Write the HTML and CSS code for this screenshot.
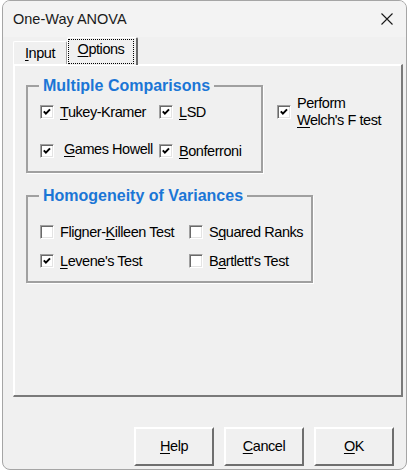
FILE: index.html
```html
<!DOCTYPE html>
<html>
<head>
<meta charset="utf-8">
<link rel="stylesheet" href="styles.css">
</head>
<body>
<div class="window">
  <div class="titlebar">
    <span class="title">One-Way ANOVA</span>
    <svg class="close" width="12" height="12" viewBox="0 0 12 12"><path d="M0.5 0.5 L11.5 11.5 M11.5 0.5 L0.5 11.5" stroke="#1a1a1a" stroke-width="1.1" fill="none"/></svg>
  </div>
  <div class="tabs">
    <div class="tab"><u>I</u>nput</div>
    <div class="tab active"><span class="focus"><u>O</u>ptions</span></div>
  </div>
  <div class="page">
    <div class="top-row">
      <div class="group g1">
        <span class="legend">Multiple Comparisons</span>
        <div class="cbgrid g1grid">
          <div class="cb"><span class="box checked"><svg viewBox="0 0 14 14"><path d="M3.8 6.3 L5.9 8.6 L10 4.4" stroke="#000" stroke-width="2" fill="none"/></svg></span><span><u>T</u>ukey-Kramer</span></div>
          <div class="cb"><span class="box checked"><svg viewBox="0 0 14 14"><path d="M3.8 6.3 L5.9 8.6 L10 4.4" stroke="#000" stroke-width="2" fill="none"/></svg></span><span><u>L</u>SD</span></div>
          <div class="cb"><span class="box checked"><svg viewBox="0 0 14 14"><path d="M3.8 6.3 L5.9 8.6 L10 4.4" stroke="#000" stroke-width="2" fill="none"/></svg></span><span class="lead"><u>G</u>ames Howell</span></div>
          <div class="cb"><span class="box checked"><svg viewBox="0 0 14 14"><path d="M3.8 6.3 L5.9 8.6 L10 4.4" stroke="#000" stroke-width="2" fill="none"/></svg></span><span><u>B</u>onferroni</span></div>
        </div>
      </div>
      <div class="cb welch"><span class="box checked"><svg viewBox="0 0 14 14"><path d="M3.8 6.3 L5.9 8.6 L10 4.4" stroke="#000" stroke-width="2" fill="none"/></svg></span><span class="two">Perform<br><u>W</u>elch's F test</span></div>
    </div>
    <div class="group g2">
      <span class="legend">Homogeneity of Variances</span>
      <div class="cbgrid g2grid">
        <div class="cb"><span class="box"></span><span>Fligner-<u>K</u>illeen Test</span></div>
        <div class="cb"><span class="box"></span><span>S<u>q</u>uared Ranks</span></div>
        <div class="cb"><span class="box checked"><svg viewBox="0 0 14 14"><path d="M3.8 6.3 L5.9 8.6 L10 4.4" stroke="#000" stroke-width="2" fill="none"/></svg></span><span><u>L</u>evene's Test</span></div>
        <div class="cb"><span class="box"></span><span>B<u>a</u>rtlett's Test</span></div>
      </div>
    </div>
  </div>
  <div class="buttons">
    <div class="btn"><span><u>H</u>elp</span></div>
    <div class="btn"><span><u>C</u>ancel</span></div>
    <div class="btn"><span><u>O</u>K</span></div>
  </div>
</div>
</body>
</html>
```
FILE: styles.css
```css
html, body {
  margin: 0;
  background: #ffffff;
}
body {
  font-family: "Liberation Sans", Arial, sans-serif;
  font-size: 14.5px;
  letter-spacing: -0.45px;
  color: #000;
}
u {
  text-decoration: underline;
  text-underline-offset: 2px;
}
.window {
  margin-left: 2px;
  width: 405px;
  height: 470px;
  box-sizing: border-box;
  border: 1px solid #a5a5a5;
  border-radius: 8px;
  background: #f0f0f0;
  overflow: hidden;
}
.titlebar {
  height: 36px;
  background: #f3f3f3;
  display: flex;
  align-items: center;
  justify-content: space-between;
  padding: 0 13px 0 10px;
  font-family: "Liberation Sans", sans-serif;
  font-size: 14.5px;
  letter-spacing: 0;
  color: #1a1a1a;
}
.close {
  display: block;
}
.tabs {
  display: flex;
  align-items: flex-end;
  height: 27px;
  margin-left: 10px;
  position: relative;
  z-index: 1;
}
.tab {
  height: 23px;
  width: 54px;
  box-sizing: border-box;
  border-top: 1px solid #fff;
  border-left: 1px solid #fff;
  border-right: 1px solid #a0a0a0;
  border-radius: 2px 2px 0 0;
  display: flex;
  align-items: center;
  justify-content: center;
  line-height: 17px;
  padding-top: 1px;
}
.tab.active {
  height: 28px;
  width: 71px;
  margin-bottom: -1px;
  border-right: 2px solid #696969;
  background: #f0f0f0;
  align-items: flex-start;
  justify-content: flex-start;
  padding-top: 0;
}
.focus {
  margin: 1px 0 0 0;
  width: 66px;
  height: 25px;
  box-sizing: border-box;
  border: 1px dotted #000;
  display: flex;
  justify-content: center;
  padding-top: 1px;
}
.page {
  margin-left: 10px;
  width: 390px;
  height: 333px;
  box-sizing: border-box;
  border-top: 1px solid #fff;
  border-left: 1px solid #fff;
  border-right: 2px solid #7a7a7a;
  border-bottom: 2px solid #7a7a7a;
  box-shadow: inset 1px 1px 0 #fff;
}
.top-row {
  display: flex;
  align-items: flex-start;
  margin: 20px 0 0 12px;
}
.group {
  position: relative;
  box-sizing: border-box;
  border: 2px solid #a0a0a0;
  box-shadow: 1px 1px 0 #fff;
}
.legend {
  position: absolute;
  top: -10px;
  left: 11px;
  padding: 0 4px;
  background: #f0f0f0;
  font-family: "Liberation Sans", sans-serif;
  font-weight: bold;
  font-size: 16px;
  letter-spacing: 0;
  line-height: 18px;
  color: #1b76d6;
  white-space: nowrap;
}
.g1 {
  width: 237px;
  height: 88px;
  padding: 17px 0 0 12px;
}
.g2 {
  width: 287px;
  height: 88px;
  margin: 22px 0 0 12px;
  padding: 27px 0 0 12px;
}
.cbgrid {
  display: grid;
}
.g1grid {
  grid-template-columns: 119px auto;
  row-gap: 23px;
}
.g2grid {
  grid-template-columns: 149px auto;
  row-gap: 13px;
}
.cb {
  display: flex;
  align-items: center;
  height: 16px;
  white-space: nowrap;
  line-height: 17px;
}
.box {
  flex: none;
  width: 14px;
  height: 14px;
  box-sizing: border-box;
  margin-right: 6px;
  background: #fff;
  border-top: 1px solid #a0a0a0;
  border-left: 1px solid #a0a0a0;
  border-right: 1px solid #fff;
  border-bottom: 1px solid #fff;
  box-shadow: inset 1px 1px 0 #696969, inset -1px -1px 0 #e3e3e3;
  position: relative;
}
.box svg {
  position: absolute;
  left: -1px;
  top: -1px;
  width: 14px;
  height: 14px;
}
.lead {
  padding-left: 4px;
  position: relative;
  top: -2px;
}
.welch {
  height: auto;
  margin: 10px 0 0 14px;
}
.two {
  line-height: 17px;
}
.buttons {
  display: flex;
  justify-content: flex-end;
  gap: 10px;
  margin-top: 30px;
  padding-right: 12px;
}
.btn {
  width: 80px;
  height: 39px;
  box-sizing: border-box;
  border-top: 2px solid #fff;
  border-left: 2px solid #fff;
  border-right: 2px solid #6e6e6e;
  border-bottom: 2px solid #6e6e6e;
  display: flex;
  align-items: center;
  justify-content: center;
  background: #f0f0f0;
  line-height: 17px;
}
```
